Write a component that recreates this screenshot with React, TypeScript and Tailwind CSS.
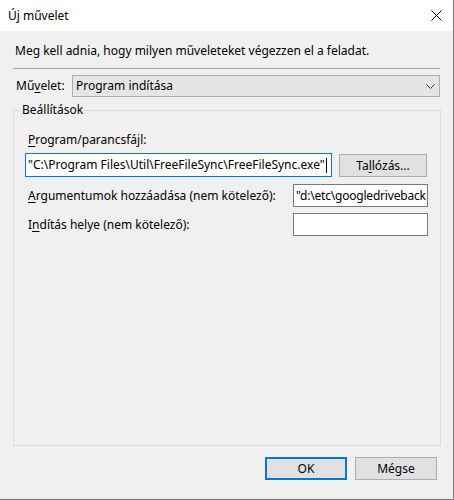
import React from "react";

const font = { fontFamily: '"Segoe UI", "Noto Sans", sans-serif' };

export default function App() {
  return (
    <div
      className="w-[454px] h-[500px] flex flex-col bg-[#f0f0f0] border-r border-b border-[#7a7a7a] text-[12px] leading-[16px] text-black"
      style={font}
    >
      {/* Title bar */}
      <div className="h-[31px] shrink-0 bg-white flex items-center justify-between pl-[8px] pr-[11px]">
        <span>Új művelet</span>
        <svg width="11" height="11" viewBox="0 0 11 11">
          <path d="M0.5 0.5L10.5 10.5M10.5 0.5L0.5 10.5" stroke="#000" strokeWidth="1" />
        </svg>
      </div>

      <div className="flex-1 flex flex-col">
        <div className="pl-[15px] pt-[12px]">
          Meg kell adnia, hogy milyen műveleteket végezzen el a feladat.
        </div>
        <div className="ml-[13px] w-[427px] h-px bg-[#a0a0a0] mt-[9px]" />

        {/* Művelet row */}
        <div className="flex items-center mt-[6px] h-[22px]">
          <span className="pl-[16px] w-[72px]">
            Mű<span className="underline underline-offset-2">v</span>elet:
          </span>
          <div className="w-[368px] h-[22px] bg-[#e5e5e5] border border-[#adadad] flex items-center justify-between pl-[3px] pr-[4px]">
            <span>Program indítása</span>
            <svg width="9" height="5" viewBox="0 0 9 5">
              <path d="M0.5 0.5L4.5 4.5L8.5 0.5" fill="none" stroke="#333" strokeWidth="1" />
            </svg>
          </div>
        </div>

        {/* Group box */}
        <fieldset className="ml-[13px] w-[428px] h-[344px] mt-[5px] border border-[#dcdcdc] p-0 m-0">
          <legend className="ml-[7px] px-[1px]">Beállítások</legend>

          <div className="pl-[14px] mt-[14px]">
            <span className="underline underline-offset-2">P</span>rogram/parancsfájl:
          </div>

          <div className="flex items-start mt-[5px] pl-[11px]">
            <div className="w-[307px] h-[24px] bg-white border border-[#0078d7] flex items-center pl-[2px]">
              <span>"C:\Program Files\Util\FreeFileSync\FreeFileSync.exe"</span>
              <span className="w-px h-[15px] bg-black ml-[1px]" />
            </div>
            <div className="w-[88px] h-[23px] mt-[1px] ml-[7px] bg-[#e1e1e1] border border-[#adadad] flex items-center justify-center">
              <span>
                Ta<span className="underline underline-offset-2">l</span>lózás...
              </span>
            </div>
          </div>

          <div className="flex items-center mt-[7px] pl-[14px] pr-[12px]">
            <span className="flex-1">
              <span className="underline underline-offset-2">A</span>rgumentumok hozzáadása (nem kötelező):
            </span>
            <div className="w-[135px] h-[23px] bg-white border border-[#7a7a7a] flex items-center pl-[2px] whitespace-nowrap tracking-[-0.2px]">
              "d:\etc\googledriveback
            </div>
          </div>

          <div className="flex items-center mt-[6px] pl-[14px] pr-[12px]">
            <span className="flex-1">
              I<span className="underline underline-offset-2">n</span>dítás helye (nem kötelező):
            </span>
            <div className="w-[135px] h-[23px] bg-white border border-[#7a7a7a]" />
          </div>
        </fieldset>

        {/* Buttons */}
        <div className="flex justify-end gap-[8px] mt-[11px] pr-[16px]">
          <div className="w-[82px] h-[23px] bg-[#e1e1e1] border-2 border-[#0078d7] flex items-center justify-center">
            OK
          </div>
          <div className="w-[82px] h-[23px] bg-[#e1e1e1] border border-[#adadad] flex items-center justify-center">
            Mégse
          </div>
        </div>
      </div>
    </div>
  );
}
